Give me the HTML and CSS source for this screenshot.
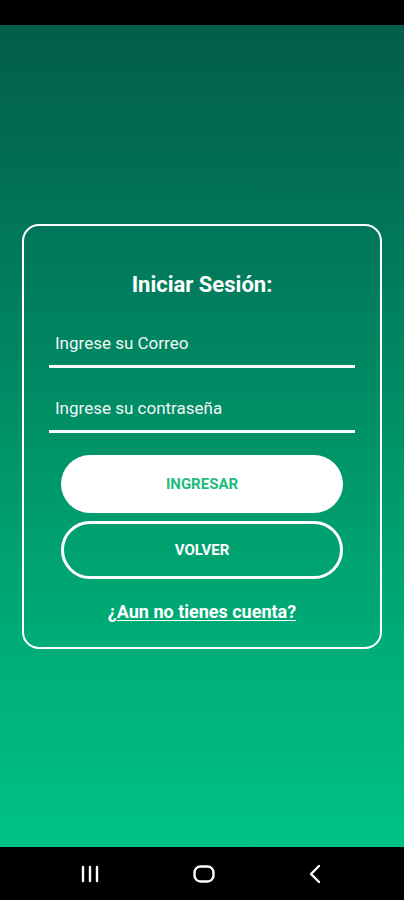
FILE: index.html
```html
<!DOCTYPE html>
<html lang="es">
<head>
<meta charset="utf-8">
<title>Iniciar Sesión</title>
<link rel="stylesheet" href="styles.css">
</head>
<body>
<div class="screen">
  <div class="statusbar"></div>
  <main class="content">
    <section class="card">
      <h1 class="title">Iniciar Sesión:</h1>
      <div class="field"><span class="placeholder">Ingrese su Correo</span></div>
      <div class="field field-second"><span class="placeholder">Ingrese su contraseña</span></div>
      <div class="buttons">
        <button class="btn btn-primary">INGRESAR</button>
        <button class="btn btn-outline">VOLVER</button>
      </div>
      <a class="link" href="#">¿Aun no tienes cuenta?</a>
    </section>
  </main>
  <nav class="navbar">
    <svg class="nav-icon" width="20" height="18" viewBox="0 0 20 18"><g stroke="#fff" stroke-width="2.4" stroke-linecap="round"><line x1="3" y1="2" x2="3" y2="16"/><line x1="10" y1="2" x2="10" y2="16"/><line x1="17" y1="2" x2="17" y2="16"/></g></svg>
    <svg class="nav-icon" width="22" height="18" viewBox="0 0 22 18"><rect x="1.5" y="1.5" width="19" height="15" rx="6" fill="none" stroke="#fff" stroke-width="2.4"/></svg>
    <svg class="nav-icon" width="14" height="20" viewBox="0 0 14 20"><polyline points="11,2 3,10 11,18" fill="none" stroke="#fff" stroke-width="2.4" stroke-linecap="round" stroke-linejoin="round"/></svg>
  </nav>
</div>
</body>
</html>
```
FILE: styles.css
```css
* { box-sizing: border-box; }
html, body { margin: 0; padding: 0; }
body {
  font-family: Roboto, "Liberation Sans", Arial, sans-serif;
  background: #000;
}
.screen {
  width: 404px;
  height: 900px;
  display: flex;
  flex-direction: column;
}
.statusbar {
  height: 25px;
  background: #000;
  flex: none;
}
.content {
  flex: 1;
  background: linear-gradient(180deg, #035d4b 0%, #007b5c 30%, #00a370 65%, #00c284 100%);
  display: flex;
  align-items: center;
  justify-content: center;
}
.card {
  width: 360px;
  height: 425px;
  border: 2.5px solid #fff;
  border-radius: 17px;
  display: flex;
  flex-direction: column;
  align-items: center;
  padding: 0 25px;
}
.title {
  margin: 46px 0 0;
  color: #fff;
  font-size: 22px;
  font-weight: 700;
  line-height: 26px;
}
.field {
  align-self: stretch;
  margin-top: 23px;
  border-bottom: 3px solid #fff;
  padding: 0 0 12px 6px;
  height: 47px;
  display: flex;
  align-items: flex-end;
}
.field-second { margin-top: 18px; }
.placeholder {
  color: #f2f6f4;
  font-size: 17px;
  line-height: 20px;
}
.buttons {
  align-self: stretch;
  margin: 22px 12px 0;
  display: flex;
  flex-direction: column;
  gap: 8px;
}
.btn {
  height: 58px;
  border-radius: 29px;
  font-family: Roboto, "Liberation Sans", Arial, sans-serif;
  font-size: 15px;
  font-weight: 700;
  cursor: pointer;
}
.btn-primary {
  background: #fff;
  color: #1cbd7c;
  border: none;
}
.btn-outline {
  background: transparent;
  color: #fff;
  border: 3px solid #fff;
}
.link {
  margin-top: 23px;
  color: #fff;
  font-size: 18px;
  font-weight: 700;
  line-height: 20px;
  text-decoration: underline;
  text-underline-offset: 2px;
}
.navbar {
  height: 53px;
  background: #000;
  flex: none;
  display: flex;
  align-items: center;
  padding-left: 80px;
  gap: 93px;
}
.nav-icon { display: block; }
```
